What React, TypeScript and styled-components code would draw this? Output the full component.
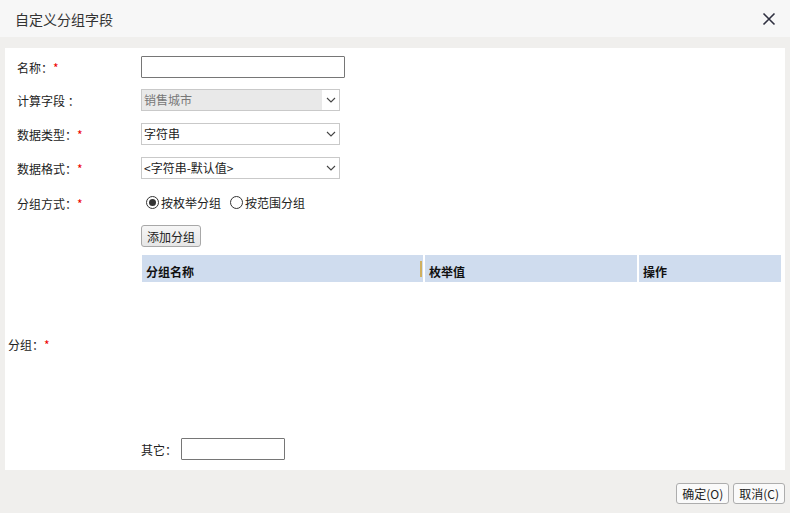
import styled, { createGlobalStyle } from "styled-components";

const GlobalStyle = createGlobalStyle`
  html, body {
    margin: 0;
    padding: 0;
    background: #f0efed;
  }
  body {
    font-family: "Noto Sans CJK SC", "Liberation Sans", sans-serif;
    font-size: 12px;
    color: #222;
  }
`;

const Dialog = styled.div`
  width: 790px;
  height: 513px;
  display: flex;
  flex-direction: column;
  background: #f0efed;
`;

const Header = styled.div`
  height: 37px;
  flex: none;
  display: flex;
  align-items: center;
  justify-content: space-between;
  padding: 0 14px 0 15px;
  background: #f7f7f7;
  box-sizing: border-box;
`;

const Title = styled.div`
  font-size: 14px;
  color: #333;
`;

const Close = styled.button`
  width: 14px;
  height: 14px;
  border: 0;
  padding: 0;
  background: none;
  display: flex;
`;

const Panel = styled.div`
  margin: 11px 5px 0;
  height: 422px;
  background: #fff;
  padding: 8px 4px 0 12px;
  box-sizing: border-box;
  display: flex;
  flex-direction: column;
`;

const Row = styled.div<{ $gap?: number }>`
  display: grid;
  grid-template-columns: 124px 1fr;
  align-items: center;
  height: 22px;
  margin-top: ${({ $gap }) => $gap ?? 0}px;
`;

const Label = styled.div`
  white-space: pre;
`;

const Star = styled.span`
  color: #e00;
`;

const TextInput = styled.input<{ $w: number }>`
  width: ${({ $w }) => $w}px;
  height: 22px;
  box-sizing: border-box;
  border: 1px solid #767676;
  border-radius: 1px;
  padding: 0 3px;
  font: inherit;
  outline: none;
`;

const Select = styled.div<{ $disabled?: boolean }>`
  width: 199px;
  height: 22px;
  box-sizing: border-box;
  border: 1px solid #c9c9c9;
  display: flex;
  background: #fff;
  color: ${({ $disabled }) => ($disabled ? "#777" : "#222")};
`;

const SelectText = styled.div<{ $disabled?: boolean }>`
  flex: 1;
  padding-left: 2px;
  line-height: 20px;
  background: ${({ $disabled }) => ($disabled ? "#e9e9e9" : "#fff")};
`;

const Arrow = styled.div`
  width: 17px;
  display: flex;
  align-items: center;
  justify-content: center;
`;

const Radios = styled.div`
  display: flex;
  align-items: center;
  gap: 4px;
  margin-top: -1px;
`;

const RadioItem = styled.label`
  display: flex;
  align-items: center;
  gap: 2px;
`;

const RadioCircle = styled.span<{ $on?: boolean }>`
  width: 13px;
  height: 13px;
  box-sizing: border-box;
  border-radius: 50%;
  border: 1px solid #333;
  display: flex;
  align-items: center;
  justify-content: center;
  margin-left: 5px;
  &::after {
    content: "";
    width: 7px;
    height: 7px;
    border-radius: 50%;
    background: ${({ $on }) => ($on ? "#333" : "transparent")};
  }
`;

const GroupRow = styled.div`
  display: grid;
  grid-template-columns: 124px 1fr;
  align-items: center;
  margin-top: 11px;
  margin-left: -9px;
`;

const GroupLabel = styled.div`
  padding-top: 4px;
`;

const GroupContent = styled.div`
  margin-left: 9px;
  display: flex;
  flex-direction: column;
`;

const Button = styled.button`
  height: 22px;
  padding: 0 5px;
  font: inherit;
  font-size: 12px;
  color: #222;
  background: linear-gradient(#f6f6f6, #e6e6e6);
  border: 1px solid #a8a8a8;
  border-radius: 3px;
  align-self: flex-start;
  box-sizing: border-box;
`;

const TableHead = styled.div`
  margin: 8px 0 0 1px;
  height: 27px;
  display: grid;
  grid-template-columns: 281px 212px 1fr;
  gap: 2px;
`;

const HeadCell = styled.div`
  background: #cfdcee;
  font-weight: bold;
  color: #111;
  display: flex;
  align-items: flex-end;
  padding: 0 0 2px 4px;
  position: relative;
`;

const Grip = styled.span`
  position: absolute;
  right: 1px;
  top: 6px;
  width: 2px;
  height: 16px;
  background: #d0b060;
`;

const TableBody = styled.div`
  height: 156px;
`;

const OtherRow = styled.div`
  display: flex;
  align-items: center;
  gap: 4px;
  height: 22px;
`;

const Footer = styled.div`
  flex: 1;
  display: flex;
  justify-content: flex-end;
  align-items: flex-start;
  gap: 4px;
  padding: 13px 5px 0 0;
`;

const FootButton = styled.button`
  height: 21px;
  padding: 0 5px;
  font: inherit;
  font-size: 12px;
  color: #222;
  background: #fafafa;
  border: 1px solid #adadad;
  border-radius: 3px;
  box-sizing: border-box;
`;

const Chevron = () => (
  <svg width="10" height="6" viewBox="0 0 10 6">
    <path d="M1 1 L5 5 L9 1" fill="none" stroke="#444" strokeWidth="1.1" />
  </svg>
);

const Req = ({ text }: { text: string }) => (
  <Label>
    {text}：<Star>*</Star>
  </Label>
);

export default function App() {
  return (
    <>
      <GlobalStyle />
      <Dialog>
        <Header>
          <Title>自定义分组字段</Title>
          <Close aria-label="close">
            <svg width="14" height="14" viewBox="0 0 14 14">
              <path d="M1.5 1.5 L12.5 12.5 M12.5 1.5 L1.5 12.5" stroke="#2f3040" strokeWidth="1.6" />
            </svg>
          </Close>
        </Header>
        <Panel>
          <Row>
            <Req text="名称" />
            <TextInput $w={204} />
          </Row>
          <Row $gap={11}>
            <Label>计算字段 ：</Label>
            <Select $disabled>
              <SelectText $disabled>销售城市</SelectText>
              <Arrow><Chevron /></Arrow>
            </Select>
          </Row>
          <Row $gap={12}>
            <Req text="数据类型" />
            <Select>
              <SelectText>字符串</SelectText>
              <Arrow><Chevron /></Arrow>
            </Select>
          </Row>
          <Row $gap={12}>
            <Req text="数据格式" />
            <Select>
              <SelectText>&lt;字符串-默认值&gt;</SelectText>
              <Arrow><Chevron /></Arrow>
            </Select>
          </Row>
          <Row $gap={13}>
            <Req text="分组方式" />
            <Radios>
              <RadioItem>
                <RadioCircle $on />
                按枚举分组
              </RadioItem>
              <RadioItem>
                <RadioCircle />
                按范围分组
              </RadioItem>
            </Radios>
          </Row>
          <GroupRow>
            <GroupLabel>
              分组：<Star>*</Star>
            </GroupLabel>
            <GroupContent>
              <Button>添加分组</Button>
              <TableHead>
                <HeadCell>
                  分组名称
                  <Grip />
                </HeadCell>
                <HeadCell>枚举值</HeadCell>
                <HeadCell>操作</HeadCell>
              </TableHead>
              <TableBody />
              <OtherRow>
                <span>其它：</span>
                <TextInput $w={104} />
              </OtherRow>
            </GroupContent>
          </GroupRow>
        </Panel>
        <Footer>
          <FootButton>确定(O)</FootButton>
          <FootButton>取消(C)</FootButton>
        </Footer>
      </Dialog>
    </>
  );
}
